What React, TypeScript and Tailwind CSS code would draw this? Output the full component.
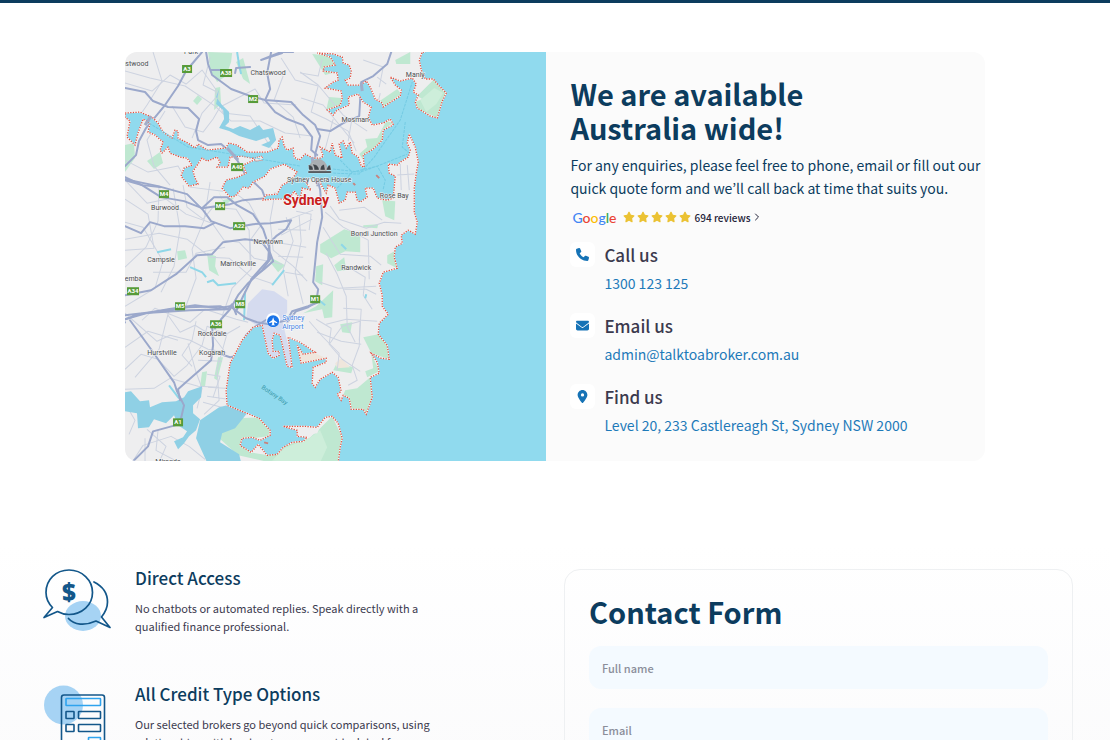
import { FaPhone, FaEnvelope, FaLocationDot, FaStar } from 'react-icons/fa6';
import { ChevronRight } from 'lucide-react';

interface MapLabel {
  text: string;
  x: number;
  y: number;
}

const places: MapLabel[] = [
  { text: 'Eastwood', x: 133, y: 66 },
  { text: 'Park', x: 191, y: 54 },
  { text: 'Chatswood', x: 268, y: 75 },
  { text: 'Manly', x: 415, y: 77 },
  { text: 'Mosman', x: 355, y: 122 },
  { text: 'Sydney Opera House', x: 319, y: 182 },
  { text: 'Rose Bay', x: 394, y: 198 },
  { text: 'Bondi Junction', x: 374, y: 236 },
  { text: 'Randwick', x: 356, y: 270 },
  { text: 'Burwood', x: 165, y: 210 },
  { text: 'Newtown', x: 268, y: 244 },
  { text: 'Campsie', x: 161, y: 262 },
  { text: 'Marrickville', x: 238, y: 266 },
  { text: 'Lakemba', x: 128, y: 281 },
  { text: 'Rockdale', x: 212, y: 336 },
  { text: 'Kogarah', x: 212, y: 355 },
  { text: 'Hurstville', x: 162, y: 355 },
  { text: 'Miranda', x: 168, y: 464 },
];

const routes: MapLabel[] = [
  { text: 'A3', x: 187, y: 69 },
  { text: 'A38', x: 226, y: 73 },
  { text: 'M2', x: 253, y: 99 },
  { text: 'A40', x: 237, y: 167 },
  { text: 'M4', x: 164, y: 194 },
  { text: 'M4', x: 220, y: 206 },
  { text: 'A22', x: 239, y: 226 },
  { text: 'A34', x: 133, y: 291 },
  { text: 'M5', x: 180, y: 306 },
  { text: 'M8', x: 240, y: 304 },
  { text: 'M1', x: 315, y: 299 },
  { text: 'A36', x: 216, y: 324 },
  { text: 'A1', x: 178, y: 422 },
];

const contacts = [
  { title: 'Call us', value: '1300 123 125', href: 'tel:1300123125', icon: FaPhone },
  { title: 'Email us', value: 'admin@talktoabroker.com.au', href: 'mailto:admin@talktoabroker.com.au', icon: FaEnvelope },
  { title: 'Find us', value: 'Level 20, 233 Castlereagh St, Sydney NSW 2000', href: '#map', icon: FaLocationDot },
];

const fields = [
  { id: 'name', label: 'Full name', type: 'text' },
  { id: 'email', label: 'Email', type: 'email' },
];

// Coordinates share one plane, so the coast, roads and labels line up
const harbour =
  'M125 113L140 112L152 117L158 123L163 132L172 138L175 130L178 131L178 138L188 143L195 148L198 144L207 150L225 148L229 143L237 145L247 152L267 152L278 148L279 140L282 137L284 146L287 150L293 148L294 157L299 160L305 154L313 158L320 158L323 156L320 147L330 152L332 143L335 155L342 158L339 144L343 141L346 148L350 142L352 153L358 157L361 166L364 167L363 155L373 149L382 140L383 130L391 126L393 124L390 119L383 123L372 125L368 117L371 107L363 102L358 94L348 97L349 105L337 110L333 115L327 110L340 105L342 98L341 91L325 88L333 82L338 80L337 73L323 71L324 67L335 65L330 57L317 53L333 54L342 57L343 63L349 65L351 71L350 78L345 80L348 85L360 85L366 81L370 87L375 99L382 103L383 107L392 101L400 96L401 90L395 85L390 77L400 81L412 78L416 84L413 92L418 95L415 102L417 108L430 116L437 118L442 101L446 93L438 85L433 79L425 79L421 70L419 60L422 52L546 52L546 462L338 462L340 447L342 438L338 423L332 416L325 417L317 427L305 426L283 426L297 430L297 436L307 437L303 441L292 442L283 447L277 454L267 455L258 444L251 452L240 445L242 438L252 437L260 440L270 435L270 430L259 418L247 413L227 405L226 390L230 363L242 340L253 327L262 325L268 353L273 358L279 355L279 351L273 351L272 340L274 333L280 335L287 366L292 367L288 337L300 342L315 352L303 354L297 345L301 363L326 358L326 362L313 367L312 383L315 387L320 379L332 372L338 377L341 391L337 394L341 400L343 395L349 398L351 409L363 409L366 414L372 397L370 377L379 373L377 362L371 353L381 358L389 359L387 345L378 334L379 323L388 314L382 306L382 295L379 283L383 272L397 268L394 257L395 247L402 243L401 235L408 230L415 234L417 222L414 212L414 188L416 173L418 162L415 147L409 134L407 143L410 150L408 157L400 162L397 165L388 164L389 173L395 176L393 198L387 200L377 198L373 188L365 188L367 197L360 202L357 200L355 192L347 192L345 200L339 203L335 188L328 185L326 193L321 185L318 174L313 178L309 174L306 183L311 190L302 188L300 199L294 191L289 199L272 199L262 200L266 195L277 194L282 185L290 181L297 172L284 164L270 169L265 176L253 182L249 188L243 187L235 196L230 197L222 188L226 180L238 177L246 173L243 165L256 159L242 156L230 157L228 167L217 167L220 162L217 157L207 161L202 158L193 171L195 178L198 184L189 186L181 176L184 168L192 165L187 158L180 157L170 153L168 147L162 153L160 150L163 142L155 135L148 132L150 123L143 119L138 133L135 145L127 137L130 121L125 117Z';

const parks = [
  'M125 145L134 143L135 158L125 172Z',
  'M208 52L232 53L231 62L226 76L217 82L210 70Z',
  'M236 62L243 58L250 84L243 79Z',
  'M215 88L220 87L221 104L214 110Z',
  'M193 101L198 95L202 99L197 105Z',
  'M147 161L160 152L163 163L154 169Z',
  'M312 54L340 57L340 71L325 75Z',
  'M395 60L410 52L410 64L396 64Z',
  'M329 97L341 98L340 106L326 110Z',
  'M378 102L397 89L401 94L384 106Z',
  'M417 96L434 79L446 92L437 118L418 109L415 102L422 99Z',
  'M386 121L393 123L382 130L382 140L363 160L359 154L367 147L365 139L377 138Z',
  'M382 200L395 201L394 220L385 216Z',
  'M320 244L344 229L360 234L360 252L345 251L331 258L320 252Z',
  'M334 265L344 257L346 270L337 271Z',
  'M387 255L396 250L397 268L387 263Z',
  'M316 266L323 264L322 285L315 281Z',
  'M316 306L333 290L332 317L324 318L322 309L303 313Z',
  'M363 225L378 224L377 228L363 227Z',
  'M177 251L185 250L187 258L178 260Z',
  'M272 258L285 265L278 272L270 262Z',
  'M207 253L216 256L215 266L219 276L209 270Z',
  'M218 190L222 200L235 197L225 205Z',
  'M340 324L352 322L350 333L342 332Z',
  'M363 337L378 334L387 345L389 359L371 353Z',
  'M371 353L379 371L367 377L365 371L373 368Z',
  'M333 370L337 362L353 367L351 373Z',
  'M345 390L357 388L370 377L372 397L366 413L351 409L349 398L343 395Z',
  'M218 357L223 357L217 380L214 378Z',
  'M202 372L207 371L205 386L200 386Z',
  'M236 418L258 417L270 430L268 436L252 438L240 444L250 452L268 455L283 446L309 438L320 428L332 416L342 437L338 462L270 462L238 455L218 437Z',
];

const minorRoads = [
  'M125 83L152 91L170 75L186 84L202 70L219 94L202 113L192 138',
  'M153 52L162 81L147 105L132 127',
  'M125 71L150 78L185 86L215 106L231 121L260 121L285 133L312 136',
  'M172 106L185 127L203 132L213 119L220 107L255 89L264 103L296 105',
  'M165 111L147 140L154 166L170 185',
  'M125 160L148 172L178 166L190 187L223 191',
  'M210 57L203 85L215 91L223 113L250 116L272 149',
  'M281 58L295 80L318 86L311 112L326 119L348 131L356 151',
  'M300 72L318 85L343 115L367 131M301 98L323 105L354 143',
  'M283 76L274 100L293 117L300 138M333 119L325 149',
  'M363 60L383 67L379 87M377 77L386 84M352 117L348 141',
  'M125 180L147 203L166 199L186 214L212 223L224 240L239 242L254 258L282 264',
  'M125 239L159 233L187 239L210 257L229 258L250 276L274 284',
  'M125 267L146 247L158 221L159 185M173 188L180 229L174 266L161 292',
  'M183 185L187 207L203 219L213 207L236 209L249 230L250 261',
  'M210 182L204 220L192 249L196 278L184 311',
  'M125 222L143 227L163 261L155 288L125 306',
  'M231 190L249 203L261 225L250 240L251 269L232 288L222 316',
  'M275 192L270 220L273 250L293 266L307 281',
  'M286 217L293 241L283 269L288 296M299 216L301 241L295 272L303 304',
  'M278 229L306 230M275 242L306 247M278 256L303 257M285 272L303 275',
  'M297 202L314 203M296 211L311 214L309 230M284 221L313 210M281 235L312 219',
  'M330 206L339 219L366 228L384 222L401 223M339 210L364 207L382 220',
  'M323 227L340 254L370 256L381 265M325 212L343 227L368 240L369 279',
  'M326 253L337 274L346 296L347 326L355 342',
  'M347 266L365 277L363 295L372 309M344 289L366 289L376 294M320 282L338 288L376 286',
  'M316 319L331 328L329 344L342 359L360 371M317 332L341 341L361 344',
  'M360 321L359 346L352 365L357 380L348 385M329 344L342 326L360 321',
  'M309 321L323 337L339 353L337 370M343 308L361 309L359 340M326 324L346 319L377 321',
  'M125 313L157 341L170 335L190 340L208 349L221 351',
  'M142 320L155 308L190 322L205 309L236 319L248 322M169 310L159 349L135 377',
  'M125 369L141 354L158 359L174 376L187 365L202 345L207 326L226 334L240 326',
  'M125 389L154 388L170 378L198 386L218 387M198 360L222 361M207 374L220 376L213 397',
  'M207 396L228 399M208 387L225 388M203 402L225 408M227 333L217 369L219 400L204 414',
  'M188 343L196 372L202 388L197 408M168 315L180 332L195 325L213 336L226 353',
  'M132 462L143 445L171 436L189 446L205 459M147 429L166 446L159 462',
  'M158 430L156 450L177 461M125 403L135 420L129 434M145 438L145 462',
  'M125 347L148 331L178 340M196 321L192 340L182 355L192 366',
  'M125 199L148 214L154 248L125 250M153 272L186 272L196 253L225 247',
  'M322 59L318 76L300 73M380 93L378 102M400 164L401 190M407 165L409 190M397 175L414 174',
];

const majorRoads = [
  'M125 88L145 92L153 101L168 107L188 108L199 119L196 131L198 140L208 145L221 144L230 152L237 160L245 174L262 190L265 198L243 200L230 204L202 208L184 201L161 197L142 185L125 177',
  'M202 52L186 71L178 86L165 105L146 128L139 141L136 155L125 166',
  'M206 52L208 64L212 75L231 89L250 96L265 100L291 102L303 115L315 125L320 136L315 154L316 174L320 190L322 217L317 242L313 282L318 289L316 302L308 307L296 311L287 322',
  'M211 70L225 70M250 67L236 68L235 73M271 52L267 73L270 89L265 100L275 112L287 119L303 125L312 137L311 150L317 155',
  'M391 52L387 64L373 76L361 82L359 116L343 123L330 131L317 129',
  'M362 82L363 90M282 53L261 60L281 52L293 52',
  'M125 179L158 186L187 194L203 210L211 221L230 228L253 224L270 223L291 220L286 229L276 236L269 243L270 259L262 270L248 283L238 295L230 309L221 319L215 328',
  'M125 226L141 233L150 222L164 226L185 226L204 228L214 223',
  'M202 208L214 197L227 197L237 205L253 214L263 229L269 247L268 260L252 278L243 296L236 311',
  'M125 295L151 290L176 274L197 255L212 254L223 242L245 239L261 241L270 253L273 261L264 269L251 279',
  'M125 319L146 313L168 309L195 305L218 308L230 306L246 318L257 322L269 324L287 320L292 311L308 306L318 302',
  'M125 319L142 313L190 310L228 309L232 304L236 314M125 315L151 312L188 307L220 306L228 309',
  'M130 320L151 349L174 382L177 391L184 405L181 418L175 425L153 431L148 446L132 462',
  'M212 325L213 345L211 360L187 381L178 389L180 400M215 352L230 357L235 356L246 335L254 327L267 319',
  'M125 322L118 329M125 180L142 185L160 187',
];

function SydneyMap() {
  return (
    <svg
      id="map"
      className="block h-full w-full"
      viewBox="125 52 421 410"
      preserveAspectRatio="xMinYMin slice"
      role="img"
      aria-label="Map of Sydney"
    >
      <rect x="125" y="52" width="421" height="410" fill="#eeeeef" />
      {parks.map((d, index) => (
        <path key={index} d={d} fill="#bfe8d1" />
      ))}
      <path d="M420 100L434 88L443 93L436 104L426 112Z" fill="#cdeeda" />
      <path d="M309 438L320 430L327 447L320 462L285 462L272 460L284 448Z" fill="#cdeeda" />
      <path d="M284 427L304 427L320 427L317 433L305 435L296 434Z" fill="#eeeeef" />
      <path d="M297 345L315 353L326 358L326 361L301 363Z" fill="#efe6dc" />
      <path d="M335 363L341 358L350 367L337 368Z" fill="#efe6dc" />
      <path d="M248 303L262 289L274 291L287 300L287 312L282 320L268 334L256 325L246 318Z" fill="#d5dbef" />
      <path d="M260 324L282 320L294 370L284 370L278 340L276 342L282 356L272 361L265 353Z" fill="#d5dbef" />
      <g fill="none" stroke="#cdd3e0" strokeWidth="1" strokeLinejoin="round">
        {minorRoads.map((d, index) => (
          <path key={index} d={d} />
        ))}
      </g>

      {/* Inland rivers and creeks */}
      <path
        d="M125 392L131 391L140 401L149 400L150 407L162 402L176 401L184 397L188 391L202 386L201 397L193 405L193 413L200 419L196 430L189 436L184 443L178 449L174 441L183 437L187 431L178 425L174 415L166 423L154 419L149 427L138 428L137 413L125 411Z"
        fill="#8fd0e5"
      />
      <path
        d="M200 420L219 407L227 405L247 413L235 428L222 433L220 442L239 454L241 462L207 462L196 438Z"
        fill="#8fd0e5"
      />
      <path
        d="M219 89L216 97L222 105L229 112L229 122L225 126L233 129L240 126L250 130L259 125L263 130L273 128L276 140L269 148L261 145L270 141L268 137L256 141L249 139L239 136L229 131L219 128L224 119L223 110L216 104Z"
        fill="#8fd0e5"
      />
      <path
        d="M157 252L171 249M190 267L202 272L206 277M207 282L213 280L218 285L236 283M272 285L284 270M237 52L239 65L241 74M245 291L244 320M341 244L346 249M365 298L366 294M319 300L325 305M169 385L179 398"
        fill="none"
        stroke="#8fd7e8"
        strokeWidth="2"
      />

      <g fill="none" stroke="#9ba8cb" strokeLinejoin="round" strokeLinecap="round" strokeWidth="2">
        {majorRoads.map((d, index) => (
          <path key={index} d={d} />
        ))}
      </g>
      <path d={harbour} fill="#90daee" />
      <path d={harbour} fill="none" stroke="#fff" strokeWidth="1" strokeLinejoin="round" />
      <path d={harbour} fill="none" stroke="#e0503f" strokeWidth="1.3" strokeDasharray="1.3 1.3" />
      <path d="M253 158L262 156L263 160L256 161Z" fill="#eee" stroke="#e26c62" strokeDasharray="1 1" />
      <path d="M264 442L268 443M353 183L355 185M376 175L379 178" stroke="#c8837e" strokeWidth="2" />
      <path
        d="M333 169L360 172L377 166L407 154M333 173L359 174L374 157L400 120L412 82M405 122L402 147L409 153M352 172L377 166L385 180L383 189M340 160L352 172L337 188M149 123L188 147L238 155L300 166"
        fill="none"
        stroke="#74cbe3"
        strokeWidth="1"
        strokeDasharray="3 1"
      />
      <path d="M312 157L314 174L318 186M227 148L238 160M151 116L145 125M361 83L362 91" fill="none" stroke="#a2acc8" strokeWidth="3" />
      <path d="M546 52V462" stroke="#90daee" strokeWidth="3" />
      <path d="M425 52H546" stroke="#90daee" strokeWidth="3" />
      <path d="M340 462H546" stroke="#90daee" strokeWidth="3" />

      {routes.map((route, index) => (
        <g key={index}>
          <rect
            x={route.x - (route.text.length > 2 ? 6 : 5)}
            y={route.y - 4}
            width={route.text.length > 2 ? 12 : 10}
            height="8"
            fill="#579b39"
          />
          <text x={route.x} y={route.y + 2} textAnchor="middle" fontSize="6" fontWeight="700" fill="#fff">
            {route.text}
          </text>
        </g>
      ))}

      {/* Opera House marker */}
      <circle cx="318" cy="168" r="9" fill="#a9adb1" />
      <rect x="306" y="173" width="26" height="6" fill="#90daee" />
      <path
        d="M308 173V171H331V173ZM309 170C308 168 309 166 308 165C312 165 313 167 313 170ZM314 170C314 167 313 165 312 164C317 164 319 167 319 170ZM320 170C320 167 321 165 324 164L325 170ZM326 170C327 167 328 165 330 165L331 170Z"
        fill="#40454a"
        stroke="#fff"
        strokeWidth="0.3"
      />

      {/* Airport marker */}
      <path d="M273 328L267 323A7 7 0 1 1 279 323Z" fill="#fff" />
      <circle cx="273" cy="321" r="6" fill="#1a73e8" />
      <path d="M273 317L274 320L277 322V323L274 322V324L275 325H271L272 324V322L269 323V322L272 320Z" fill="#fff" />
      <g fontSize="7" fill="#3a7de0" stroke="#fff" strokeWidth="1" paintOrder="stroke">
        <text x="282" y="320">Sydney</text>
        <text x="282" y="329">Airport</text>
      </g>
      <text x="261" y="388" transform="rotate(34 261 388)" fontSize="6" fill="#3696a8">
        Botany Bay
      </text>
      <g
        fontSize="7"
        fill="#4a4d50"
        stroke="#f5f5f5"
        strokeWidth="1"
        paintOrder="stroke"
        textAnchor="middle"
      >
        {places.map((place) => (
          <text key={place.text} x={place.x} y={place.y}>
            {place.text}
          </text>
        ))}
      </g>
      <text
        x="306"
        y="205"
        textAnchor="middle"
        fontSize="14"
        fontWeight="700"
        fill="#c9201c"
        stroke="#fff"
        strokeWidth="1"
        paintOrder="stroke"
      >
        Sydney
      </text>
    </svg>
  );
}

function ChatIcon() {
  return (
    <svg className="h-[66px] w-[68px]" viewBox="0 0 68 66" fill="none" aria-hidden="true">
      <ellipse cx="40" cy="47" rx="18" ry="15" fill="#a6d3f4" />
      <g stroke="#13578a" strokeWidth="1.7" strokeLinecap="round" strokeLinejoin="round">
        <path d="M9.500 38.500C5 34 3 29 3 23.500C3 10.500 13 1 26 1S49.500 11 49.500 23.500S39 45.500 26 45.500C21.500 45.500 18 44.500 14.500 42.500L1 48.500Z" />
        <path d="M51 13C59 17 64.500 24 64.500 33C64.500 39 62.500 43 58.500 48L67 58.500L53 52C42 57 31 56 25.500 49.500" />
      </g>
      <text
        x="26"
        y="32"
        textAnchor="middle"
        fontSize="24"
        fill="#13578a"
        className="font-['Open_Sans',sans-serif] font-extrabold"
      >
        $
      </text>
    </svg>
  );
}

function FormIcon() {
  return (
    <svg className="h-[72px] w-[68px]" viewBox="0 0 68 72" fill="none" aria-hidden="true">
      <circle cx="20.500" cy="20" r="19.500" fill="#a6d3f4" />
      <g stroke="#13578a" strokeWidth="1.600">
        <rect x="18.500" y="10" width="43" height="61" rx="2.500" />
        <rect x="23" y="26.500" width="8" height="7" rx="0.500" />
        <rect x="35.500" y="26.500" width="22" height="7" rx="0.500" />
        <rect x="23" y="39.500" width="8" height="7" rx="0.500" />
        <rect x="35.500" y="39.500" width="22" height="7" rx="0.500" />
      </g>
      <g stroke="#2ea3ee" strokeWidth="1.600">
        <rect x="23" y="13.500" width="34.500" height="7" rx="0.500" />
        <rect x="45.500" y="52.500" width="12" height="7" rx="0.500" />
      </g>
    </svg>
  );
}

const features = [
  {
    title: 'Direct Access',
    text: 'No chatbots or automated replies. Speak directly with a qualified finance professional.',
    icon: ChatIcon,
  },
  {
    title: 'All Credit Type Options',
    text: 'Our selected brokers go beyond quick comparisons, using relationships with lenders to secure an ideal deal for your situation.',
    icon: FormIcon,
  },
];

export default function App() {
  return (
    <main className="min-h-screen border-t-[3px] border-[#0c3c5e] bg-linear-to-b from-white from-70% to-[#fbfbfc] font-['Noto_Sans_CJK_KR',sans-serif] text-[#3b3a4e]">
      <section className="px-6 pt-[49px]">
        <div className="mx-auto grid max-w-[860px] grid-cols-[49fr_51fr] overflow-hidden rounded-xl bg-[#fbfbfb]">
          <div className="relative font-['Roboto',sans-serif]">
            <div className="absolute inset-0">
              <SydneyMap />
            </div>
          </div>
          <div className="pt-6 pb-[23px] pl-6">
            <h2 className="text-[29px] leading-[34px] font-bold text-[#0c3c5e]">
              We are available
              <br />
              Australia wide!
            </h2>
            <p className="mt-[10px] text-[14px] leading-[23px] text-[#0c3c5e]">
              For any enquiries, please feel free to phone, email or fill out our quick quote form and we’ll call back at time that suits you.
            </p>
            <a href="#reviews" className="mt-2 flex h-[18px] items-center pl-[2px] text-[10px] font-medium text-[#24243a]">
              <span className="mr-[6px] font-['Lato',sans-serif] text-[14px]" aria-label="Google">
                <span className="text-[#4285f4]">G</span>
                <span className="text-[#ea4335]">o</span>
                <span className="text-[#fbbc05]">o</span>
                <span className="text-[#4285f4]">g</span>
                <span className="text-[#34a853]">l</span>
                <span className="text-[#ea4335]">e</span>
              </span>
              <span className="mr-1 flex gap-[2px] text-[#ebc233]">
                {[1, 2, 3, 4, 5].map((star) => (
                  <FaStar key={star} className="h-3 w-3" />
                ))}
              </span>
              694 reviews
              <ChevronRight className="h-3 w-3" />
            </a>
            <div className="mt-4 space-y-[17px]">
              {contacts.map((contact) => (
                <div key={contact.title} className="flex gap-[9px]">
                  <span className="flex h-[25px] w-[25px] items-center justify-center rounded-md bg-white">
                    <contact.icon className="h-[13px] w-[13px] text-[#1673b6]" />
                  </span>
                  <div>
                    <h3 className="text-[17px] leading-[25px] font-medium">{contact.title}</h3>
                    <a href={contact.href} className="mt-1 block text-[14px] leading-[25px] text-[#1e7ab9]">
                      {contact.value}
                    </a>
                  </div>
                </div>
              ))}
            </div>
          </div>
        </div>
      </section>

      <section className="grid grid-cols-[1fr_509px] gap-[100px] pt-[108px] pr-[37px] pl-[43px]">
        <div className="space-y-[50px]">
          {features.map((feature) => (
            <div key={feature.title} className="flex gap-6">
              <div className="h-[66px] w-[68px] shrink-0">
                <feature.icon />
              </div>
              <div className="max-w-[310px]">
                <h3 className="text-[17px] leading-[18px] font-medium text-[#0c3c5e]">{feature.title}</h3>
                <p className="mt-3 text-[11px] leading-[18px]">{feature.text}</p>
              </div>
            </div>
          ))}
        </div>
        <form className="rounded-2xl border border-[#eef0f2] px-6 pt-6 pb-6">
          <h2 className="text-[29px] leading-[34px] font-bold text-[#0c3c5e]">Contact Form</h2>
          <div className="mt-[18px] space-y-[19px]">
            {fields.map((field) => (
              <div key={field.id}>
                <label htmlFor={field.id} className="sr-only">{field.label}</label>
                <input
                  id={field.id}
                  type={field.type}
                  placeholder={field.label}
                  className="block h-[43px] w-full rounded-xl bg-[#f4faff] px-[13px] text-[11px] font-medium placeholder:text-[#8b8e9a]"
                />
              </div>
            ))}
          </div>
        </form>
      </section>
    </main>
  );
}
